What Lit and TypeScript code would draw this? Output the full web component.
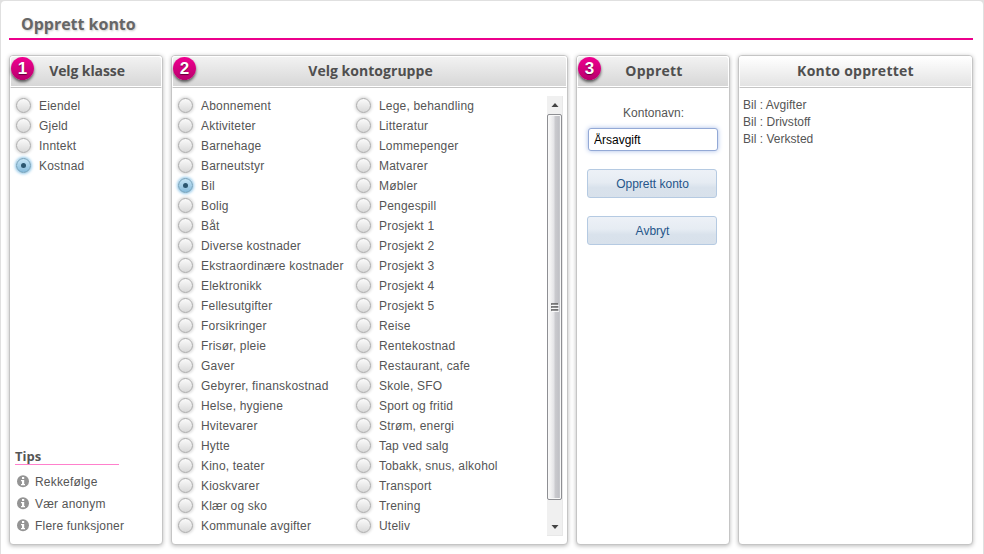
import { LitElement, html, css, svg } from "lit";
import { customElement, property } from "lit/decorators.js";

const CLASSES = ["Eiendel", "Gjeld", "Inntekt", "Kostnad"];
const GROUPS_LEFT = [
  "Abonnement", "Aktiviteter", "Barnehage", "Barneutstyr", "Bil", "Bolig", "Båt",
  "Diverse kostnader", "Ekstraordinære kostnader", "Elektronikk", "Fellesutgifter",
  "Forsikringer", "Frisør, pleie", "Gaver", "Gebyrer, finanskostnad", "Helse, hygiene",
  "Hvitevarer", "Hytte", "Kino, teater", "Kioskvarer", "Klær og sko", "Kommunale avgifter",
];
const GROUPS_RIGHT = [
  "Lege, behandling", "Litteratur", "Lommepenger", "Matvarer", "Møbler", "Pengespill",
  "Prosjekt 1", "Prosjekt 2", "Prosjekt 3", "Prosjekt 4", "Prosjekt 5", "Reise",
  "Rentekostnad", "Restaurant, cafe", "Skole, SFO", "Sport og fritid", "Strøm, energi",
  "Tap ved salg", "Tobakk, snus, alkohol", "Transport", "Trening", "Uteliv",
];
const TIPS = ["Rekkefølge", "Vær anonym", "Flere funksjoner"];
const CREATED = ["Bil : Avgifter", "Bil : Drivstoff", "Bil : Verksted"];

@customElement("radio-list")
export class RadioList extends LitElement {
  @property({ attribute: false }) items: string[] = [];
  @property() selected = "";

  static styles = css`
    :host { display: block; }
    .row {
      box-sizing: border-box; display: flex; align-items: center; height: 20px;
      padding-bottom: 1px; white-space: nowrap;
    }
    .text { padding-top: 2px; }
    .dot {
      box-sizing: border-box; flex: none; width: 15px; height: 15px; margin-right: 8px;
      border: 1px solid #a9a9a9; border-radius: 50%;
      background: linear-gradient(#fafafa, #d9d9d9);
      box-shadow: 0 0 3px 1px rgba(0, 0, 0, 0.17);
      display: flex; align-items: center; justify-content: center;
    }
    .dot.on {
      border-color: #6d9db8;
      background: linear-gradient(#c6e5f6, #86bbdb);
      box-shadow: 0 0 3px 1px #8fc6e8;
    }
    .dot.on::after {
      content: ""; width: 5px; height: 5px; border-radius: 50%; background: #2b566f;
    }
  `;

  render() {
    return this.items.map(
      (t) => html`<div class="row">
        <span class="dot ${t === this.selected ? "on" : ""}"></span><span class="text">${t}</span>
      </div>`
    );
  }
}

@customElement("titled-panel")
export class TitledPanel extends LitElement {
  @property() heading = "";
  @property() step = "";

  static styles = css`
    :host {
      box-sizing: border-box; display: flex; flex-direction: column; position: relative;
      height: 490px; border: 1px solid #c5c5c5; border-radius: 4px; background: #fff;
      box-shadow: 0 1px 4px rgba(0, 0, 0, 0.28);
    }
    .head {
      box-sizing: border-box; height: 32px; flex: none; border: 1px solid #fff;
      border-bottom: 1px solid #c5c5c5; border-radius: 3px 3px 0 0;
      box-shadow: inset 0 -1px #fff; padding-left: 2px;
      background: linear-gradient(#f2f2f2, #d6d6d6);
      text-align: center; font: bold 14px/28px "Open Sans", "Noto Sans", sans-serif;
      letter-spacing: var(--heading-tracking, 0.25px); color: #4f4f4f;
    }
    .plain { padding-left: 0; background: linear-gradient(#fff, #e2e2e2); }
    .badge {
      position: absolute; left: 1px; top: 1px; width: 23px; height: 23px; border-radius: 50%;
      background: linear-gradient(#f00090, #b8006c);
      box-shadow: 0 2px 3px rgba(0, 0, 0, 0.6);
      color: #fff; font: bold 17px/24px "Liberation Sans", Arial, sans-serif; text-align: center;
      letter-spacing: 0; text-shadow: 0 1px 1px rgba(0, 0, 0, 0.5);
    }
    .body { flex: 1; min-height: 0; display: flex; flex-direction: column; }
  `;

  render() {
    return html`
      <div class="head ${this.step ? "" : "plain"}">${this.heading}</div>
      ${this.step ? html`<span class="badge">${this.step}</span>` : ""}
      <div class="body"><slot></slot></div>
    `;
  }
}

const infoIcon = svg`
  <circle cx="6" cy="6.200" r="6" fill="#949494"></circle>
  <path d="M5 2h2.200v2H5zM4 5h3.200v4H8v1.200H4V9h1V6.200H4z" fill="#fff"></path>`;

@customElement("app-root")
export class AppRoot extends LitElement {
  static styles = css`
    :host {
      box-sizing: border-box; display: block; width: 984px; height: 554px; overflow: hidden;
      padding: 1px 1px 0; background: #e0e0e0; color: #555;
      font: 12px/17px "Liberation Sans", Arial, sans-serif; letter-spacing: 0.19px;
    }
    .page {
      box-sizing: border-box; height: 553px; background: #fff; border-radius: 4px 4px 0 0;
      padding: 0 10px 0 8px;
    }
    .title {
      box-sizing: border-box; height: 39px; margin: 0; padding: 0 0 0 12px;
      border-bottom: 2px solid #ec008c; color: #666; letter-spacing: -0.02px;
      font: bold 16px/46px "Open Sans", "Noto Sans", sans-serif;
      text-shadow: 1px 1px 2px #ccc;
    }
    .panels {
      display: grid; grid-template-columns: 154px 397px 154px 235px; gap: 8px; padding-top: 15px;
    }
    .tight { --heading-tracking: -0.1px; }
    .snug { --heading-tracking: 0.03px; }
    .classes { padding: 8px 0 0 6px; }
    .tips { margin: auto 0 8px 5px; }
    .tips-title {
      box-sizing: border-box; width: 104px; height: 17px; margin-bottom: 5px;
      border-bottom: 1px solid #ff80cc; letter-spacing: 0;
      font: bold 13px/16px "Open Sans", "Noto Sans", sans-serif;
    }
    .tip { display: flex; align-items: center; gap: 6px; height: 22px; padding-left: 2px; }
    .tip-text { padding-top: 3px; }
    .groups { display: flex; height: 440px; margin: 8px 4px 0 6px; }
    .col { width: 178px; }
    .scroll {
      box-sizing: border-box; width: 16px; margin-left: auto; background: #f0f0f0;
      border: 1px solid #e8e8e8; border-width: 0 1px 1px 0;
      display: flex; flex-direction: column; align-items: center;
    }
    .arrow { display: block; width: 15px; height: 18px; flex: none; }
    .thumb {
      box-sizing: border-box; width: 15px; height: 386px; border: 1px solid #8e8f93;
      border-radius: 2px; box-shadow: inset 0 0 0 1px #f8f8f8;
      background: linear-gradient(90deg, #f5f5f5 0 15%, #e4e4e7 45%, #cacace 55%, #c0c1c6 85%, #dedee0);
      display: flex; align-items: center; justify-content: center;
    }
    .grip { display: block; width: 8px; height: 9px; }
    .down { margin-top: auto; }
    .form { display: flex; flex-direction: column; padding: 17px 0 0 10px; }
    .label { width: 133px; text-align: center; letter-spacing: 0.05px; }
    .field {
      box-sizing: border-box; width: 130px; height: 23px; margin: 6px 0 0 1px; padding: 0 5px;
      border: 1px solid #93a9d6; border-radius: 3px; background: #fff; color: #000;
      font: inherit; letter-spacing: 0; outline: none; box-shadow: 0 0 5px #a9bee8;
    }
    .btn {
      box-sizing: border-box; width: 130px; height: 29px; margin-top: 18px;
      border: 1px solid #b5cae2; border-radius: 3px; padding: 2px 0 0 1px; color: #26568a;
      background: linear-gradient(#edf1f7, #e6ecf3 45%, #d9e2ec 65%, #d8e1eb);
      font: inherit; letter-spacing: 0;
    }
    .done { padding: 9px 4px; letter-spacing: 0.02px; }
  `;

  render() {
    return html`
      <div class="page">
        <h1 class="title">Opprett konto</h1>
        <div class="panels">
          <titled-panel class="tight" heading="Velg klasse" step="1">
            <radio-list class="classes" .items=${CLASSES} selected="Kostnad"></radio-list>
            <div class="tips">
              <div class="tips-title">Tips</div>
              ${TIPS.map(
                (t) => html`<div class="tip">
                  <svg width="12" height="13" viewBox="0 0 12 13">${infoIcon}</svg>
                  <span class="tip-text">${t}</span>
                </div>`
              )}
            </div>
          </titled-panel>
          <titled-panel class="snug" heading="Velg kontogruppe" step="2">
            <div class="groups">
              <radio-list class="col" .items=${GROUPS_LEFT} selected="Bil"></radio-list>
              <radio-list class="col" .items=${GROUPS_RIGHT}></radio-list>
              <div class="scroll">
                <svg class="arrow" viewBox="0 0 15 18"><path d="M4.500 11L8 7l3.500 4z" fill="#444"></path></svg>
                <div class="thumb">
                  <svg class="grip" viewBox="0 0 8 9">
                    <path d="M0 1h7M0 4h7M0 7h7" stroke="#555" stroke-width="1.400"></path>
                    <path d="M1 2.300h7M1 5.300h7M1 8.300h7" stroke="#fff"></path>
                  </svg>
                </div>
                <svg class="arrow down" viewBox="0 0 15 18"><path d="M4.500 8h7L8 12z" fill="#444"></path></svg>
              </div>
            </div>
          </titled-panel>
          <titled-panel heading="Opprett" step="3">
            <div class="form">
              <label class="label" for="name">Kontonavn:</label>
              <input class="field" id="name" value="Årsavgift" />
              <button class="btn">Opprett konto</button>
              <button class="btn">Avbryt</button>
            </div>
          </titled-panel>
          <titled-panel heading="Konto opprettet">
            <div class="done">${CREATED.map((t) => html`<div>${t}</div>`)}</div>
          </titled-panel>
        </div>
      </div>
    `;
  }
}
